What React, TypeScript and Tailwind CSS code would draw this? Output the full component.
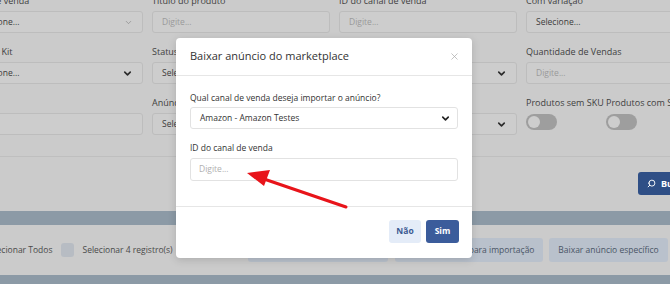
import { ChevronDown, Search, X } from "lucide-react";

const font = { fontFamily: '"Open Sans", "Liberation Sans", sans-serif' };

function Label({ children }: { children?: React.ReactNode }) {
  return <p className="h-3 mb-1 text-[9px] leading-3 text-[#3f3f3f] whitespace-nowrap">{children}</p>;
}

function Field({ label, text, chevron }: { label?: string; text: string; chevron?: "thin" | "bold" }) {
  const placeholder = text === "Digite...";
  return (
    <div>
      <Label>{label}</Label>
      <div className="h-[22px] rounded-[3px] border border-[#bdbdbd] bg-[#cdcdcd] flex items-center justify-between px-[9px]">
        <span className={`text-[8.5px] whitespace-nowrap ${placeholder ? "text-[#9a9a9a]" : "text-[#3c3c3c]"}`}>{text}</span>
        {chevron === "thin" && <ChevronDown size={9} strokeWidth={1.5} className="text-[#7a7a7a]" />}
        {chevron === "bold" && <ChevronDown size={11} strokeWidth={3.5} className="text-[#2b2b2b]" />}
      </div>
    </div>
  );
}

function Toggle({ label }: { label: string }) {
  return (
    <div className="w-[80px] shrink-0">
      <Label>{label}</Label>
      <div className="w-[31px] h-[16px] rounded-full bg-[#9e9e9e] p-[2px] mt-[5px]">
        <div className="w-[12px] h-[12px] rounded-full bg-[#cdcdcd]" />
      </div>
    </div>
  );
}

export default function App() {
  return (
    <div style={font} className="relative w-[670px] h-[284px] overflow-hidden bg-[#cbcbcb]">
      {/* ── Filter form (behind the overlay) ─────────────────────────── */}
      <div className="ml-[-35px] mt-[-5px] grid grid-cols-[178px_178px_178px_178px] gap-x-[9px] gap-y-[13px]">
        <Field label="Canal de venda" text="Selecione..." chevron="thin" />
        <Field label="Título do produto" text="Digite..." />
        <Field label="ID do canal de venda" text="Digite..." />
        <Field label="Com variação" text="Selecione..." />

        <Field label="Anúncio Kit" text="Selecione..." chevron="bold" />
        <Field label="Status" text="Selecione..." chevron="bold" />
        <Field label="Tipo de anúncio" text="Selecione..." chevron="bold" />
        <Field label="Quantidade de Vendas" text="Digite..." />

        <Field label="SKU" text="" />
        <Field label="Anúncio ativo" text="Selecione..." chevron="bold" />
        <Field label="Categoria" text="Selecione..." chevron="bold" />
        <div className="flex">
          <Toggle label="Produtos sem SKU" />
          <Toggle label="Produtos com SKU" />
        </div>
      </div>

      <div className="mt-[21px] border-t border-[#bfbfbf]" />

      <div className="flex justify-end mt-[15px] mr-[-40px]">
        <button className="h-[23px] w-[72px] rounded-[3px] bg-[#2f4f86] text-white text-[9px] font-bold flex items-center gap-[5px] pl-[9px]">
          <Search size={9} strokeWidth={2.5} className="scale-x-[-1]" />
          Buscar
        </button>
      </div>

      <div className="mt-[16px] h-[14px] bg-[#8c9aa6]" />

      {/* ── Selection + action buttons ───────────────────────────────── */}
      <div className="flex items-center justify-between h-[24px] mt-[13px] ml-[-33px] mr-[2px] whitespace-nowrap">
        <div className="flex items-center">
          <div className="shrink-0 w-[13px] h-[13px] rounded-[3px] bg-[#b7bcc3] mr-[5px]" />
          <span className="shrink-0 text-[8.5px] text-[#4a4a4a]">Selecionar Todos</span>
          <div className="shrink-0 w-[13px] h-[14px] rounded-[3px] bg-[#b7bcc3] ml-[9px] mr-[8px]" />
          <span className="shrink-0 text-[8.5px] text-[#4a4a4a]">Selecionar 4 registro(s)</span>
        </div>
        <div className="flex items-center">
          <div className="shrink-0 h-[24px] w-[140px] rounded-[3px] bg-[#b9c1cc]" />
          <div className="shrink-0 ml-[7px] h-[24px] w-[148px] rounded-[3px] bg-[#b9c1cc] flex items-center justify-center text-[8.5px] text-[#4a5566]">
            Baixar anúncios para importação
          </div>
          <div className="shrink-0 ml-[6px] h-[24px] w-[119px] rounded-[3px] bg-[#b9c1cc] flex items-center justify-center text-[8.5px] text-[#4a5566]">
            Baixar anúncio específico
          </div>
        </div>
      </div>

      <div className="mt-[13px] h-[10px] bg-[#8c9aa6]" />

      {/* ── Modal ────────────────────────────────────────────────────── */}
      <div className="absolute left-[176px] top-[38px] w-[296px] h-[220px] bg-white rounded-[4px] shadow-[0_2px_8px_rgba(0,0,0,0.15)] flex flex-col">
        <div className="h-[38px] flex items-center justify-between px-[14px] border-b border-[#e6e6e6]">
          <span className="text-[11px] text-[#333]">Baixar anúncio do marketplace</span>
          <X size={11} strokeWidth={1.5} className="text-[#a8a8a8] mr-[-2px]" />
        </div>
        <div className="px-[14px] pt-[16px] h-[131px] border-b border-[#e6e6e6]">
          <p className="text-[8.5px] leading-3 text-[#333] mb-[3px]">Qual canal de venda deseja importar o anúncio?</p>
          <div className="h-[22px] rounded-[3px] border border-[#e2e2e2] flex items-center justify-between pl-[9px] pr-[6px]">
            <span className="text-[8.5px] text-[#333]">Amazon - Amazon Testes</span>
            <ChevronDown size={11} strokeWidth={3.5} className="text-[#222]" />
          </div>
          <p className="text-[8.5px] leading-3 text-[#333] mt-[13px] mb-[4px]">ID do canal de venda</p>
          <div className="h-[23px] rounded-[3px] border border-[#e2e2e2] flex items-center pl-[8px]">
            <span className="text-[8.5px] text-[#b0b0b0]">Digite...</span>
          </div>
        </div>
        <div className="flex-1 flex items-center justify-end gap-[5px] px-[13px] pb-[2px]">
          <button className="h-[23px] w-[32px] rounded-[3px] bg-[#e4ecf8] text-[#3b5a92] text-[8.5px] font-bold">Não</button>
          <button className="h-[23px] w-[33px] rounded-[3px] bg-[#3b5c9b] text-white text-[8.5px] font-bold">Sim</button>
        </div>
      </div>

      {/* red annotation arrow */}
      <svg className="absolute left-0 top-0" width="670" height="284" viewBox="0 0 670 284">
        <line x1="346" y1="207" x2="264" y2="179" stroke="#e8141a" strokeWidth="3" strokeLinecap="round" />
        <polygon points="247,173 270,170 264,186" fill="#e8141a" />
      </svg>
    </div>
  );
}
